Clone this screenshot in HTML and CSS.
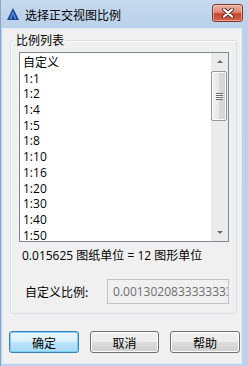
FILE: index.html
```html
<!DOCTYPE html>
<html lang="zh">
<head>
    <meta charset="UTF-8">
    <title>选择正交视图比例</title>
    <link rel="stylesheet" href="styles.css">
</head>
<body>

<div class="window">
    <!-- 标题栏 -->
    <div class="titlebar">
        <svg class="app-icon" width="12" height="12" viewBox="0 0 12 12">
            <polygon points="6,0 12,12 0,12" fill="#1d4593"/>
            <polygon points="6,3 9.5,11 2.5,11" fill="#4f8fd8"/>
            <polygon points="6,6 7.6,11 4.4,11" fill="#1d4593"/>
        </svg>
        <span class="title">选择正交视图比例</span>
        <div class="close-btn">
            <svg width="14" height="10" viewBox="0 0 14 10">
                <path d="M3 1.5 L11 8.5 M11 1.5 L3 8.5" stroke="#5a2a22" stroke-width="4" stroke-linecap="round"/>
                <path d="M3 1.5 L11 8.5 M11 1.5 L3 8.5" stroke="#ffffff" stroke-width="2.2" stroke-linecap="round"/>
            </svg>
        </div>
    </div>

    <div class="client">
        <div class="group">
            <div class="group-label">比例列表</div>
            <div class="listbox">
                <ul class="items">
                    <li>自定义</li>
                    <li>1:1</li>
                    <li>1:2</li>
                    <li>1:4</li>
                    <li>1:5</li>
                    <li>1:8</li>
                    <li>1:10</li>
                    <li>1:16</li>
                    <li>1:20</li>
                    <li>1:30</li>
                    <li>1:40</li>
                    <li>1:50</li>
                </ul>
                <div class="scrollbar">
                    <div class="sb-btn"><span class="arrow-up"></span></div>
                    <div class="sb-track">
                        <div class="sb-thumb"><span class="grip"></span></div>
                    </div>
                    <div class="sb-btn"><span class="arrow-down"></span></div>
                </div>
            </div>
            <div class="ratio">0.015625 图纸单位 = 12 图形单位</div>
            <div class="custom-row">
                <label>自定义比例:</label>
                <div class="textbox">0.0013020833333333</div>
            </div>
        </div>

        <div class="buttons">
            <button class="btn btn-default">确定</button>
            <button class="btn btn-mid">取消</button>
            <button class="btn">帮助</button>
        </div>
    </div>
</div>

</body>
</html>
```

FILE: styles.css
```css
* {
    margin: 0;
    padding: 0;
    box-sizing: border-box;
}
body {
    width: 248px;
    height: 366px;
    overflow: hidden;
    font-family: "Open Sans", "Noto Sans CJK SC", sans-serif;
    font-size: 12px;
    color: #000;
}
.window {
    width: 248px;
    height: 366px;
    display: flex;
    flex-direction: column;
    background: linear-gradient(#c6d8ee, #b9d1ea 30px, #bcd3ec);
    border-left: 1px solid #8ea6c3;
}

/* 标题栏 */
.titlebar {
    height: 29px;
    display: flex;
    align-items: center;
    padding-left: 6px;
}
.app-icon {
    margin-right: 6px;
    margin-top: -2px;
}
.title {
    font-family: "Noto Sans CJK SC", sans-serif;
    font-size: 12px;
    line-height: 16px;
}
.close-btn {
    margin-left: auto;
    margin-right: 5px;
    align-self: flex-start;
    margin-top: 4px;
    width: 31px;
    height: 18px;
    border: 1px solid #83392c;
    border-radius: 3px;
    background: linear-gradient(#eeb1a5, #de8a78 45%, #c9452d 55%, #d2634b);
    box-shadow: inset 0 0 0 1px rgba(255, 220, 210, 0.5);
    display: flex;
    align-items: center;
    justify-content: center;
}

/* 客户区 */
.client {
    flex: 1;
    margin: 0 7px 3px 2px;
    background: #f0f0f0;
    box-shadow: 0 0 0 1px #e4edf7;
    display: flex;
    flex-direction: column;
}
.group {
    margin: 11px 4px 0 7px;
    height: 274px;
    border: 1px solid #d5dfe5;
    border-radius: 3px;
    box-shadow: inset 1px 1px #fff;
    display: flex;
    flex-direction: column;
}
.group-label {
    align-self: flex-start;
    margin: -9px 0 0 3px;
    padding: 0 2px;
    background: #f0f0f0;
    font-family: "Noto Sans CJK SC", sans-serif;
    line-height: 16px;
}

/* 列表框 */
.listbox {
    margin: 4px 0 0 8px;
    width: 210px;
    height: 190px;
    border: 1px solid #828790;
    background: #fff;
    display: flex;
    overflow: hidden;
}
.items {
    flex: 1;
    list-style: none;
    padding: 2px 0 0 3px;
    overflow: hidden;
}
.items li {
    height: 15.7px;
    line-height: 15.7px;
    white-space: nowrap;
}
.scrollbar {
    width: 17px;
    background: #ebebeb;
    display: flex;
    flex-direction: column;
}
.sb-btn {
    height: 17px;
    display: flex;
    align-items: center;
    justify-content: center;
}
.arrow-up {
    width: 0;
    height: 0;
    border-left: 3px solid transparent;
    border-right: 3px solid transparent;
    border-bottom: 3px solid #6a6a6a;
}
.arrow-down {
    width: 0;
    height: 0;
    border-left: 3px solid transparent;
    border-right: 3px solid transparent;
    border-top: 3px solid #6a6a6a;
}
.sb-track {
    flex: 1;
    padding-top: 1px;
}
.sb-thumb {
    width: 16px;
    height: 50px;
    border: 1px solid #979797;
    border-radius: 2px;
    background: linear-gradient(90deg, #f3f3f3, #e8e8e8 50%, #d9d9d9 50%, #d3d3d3);
    box-shadow: inset 0 0 0 1px #fafafa;
    display: flex;
    align-items: center;
    justify-content: center;
}
.grip {
    width: 7px;
    height: 7px;
    background: repeating-linear-gradient(#6e6e6e 0 1px, #f4f4f4 1px 2px);
}

.ratio {
    margin: 6px 0 0 11px;
    line-height: 16px;
}
.custom-row {
    margin: 15px 0 0 14px;
    display: flex;
    align-items: center;
}
.custom-row label {
    width: 82px;
    font-family: "Noto Sans CJK SC", sans-serif;
}
.textbox {
    width: 122px;
    height: 25px;
    border: 1px solid #c0c2c6;
    padding-left: 5px;
    line-height: 23px;
    color: #6d6d6d;
    white-space: nowrap;
    overflow: hidden;
}

/* 按钮 */
.buttons {
    display: flex;
    margin-top: 17px;
    padding-left: 6px;
    gap: 11px;
}
.btn {
    width: 70px;
    height: 22px;
    border: 1px solid #707070;
    border-radius: 3px;
    background: linear-gradient(#f2f2f2, #ebebeb 50%, #dddddd 50%, #cfcfcf);
    box-shadow: inset 0 0 0 1px #fcfcfc;
    font-family: "Noto Sans CJK SC", sans-serif;
    font-size: 12px;
    color: #000;
}
.btn-mid {
    width: 69px;
}
.btn-default {
    border-color: #3c7fb1;
    background: linear-gradient(#eaf6fd, #d9f0fc 50%, #bee6fd 50%, #a7d9f5);
    box-shadow: inset 0 0 0 1px #7ed3f5;
}
```
